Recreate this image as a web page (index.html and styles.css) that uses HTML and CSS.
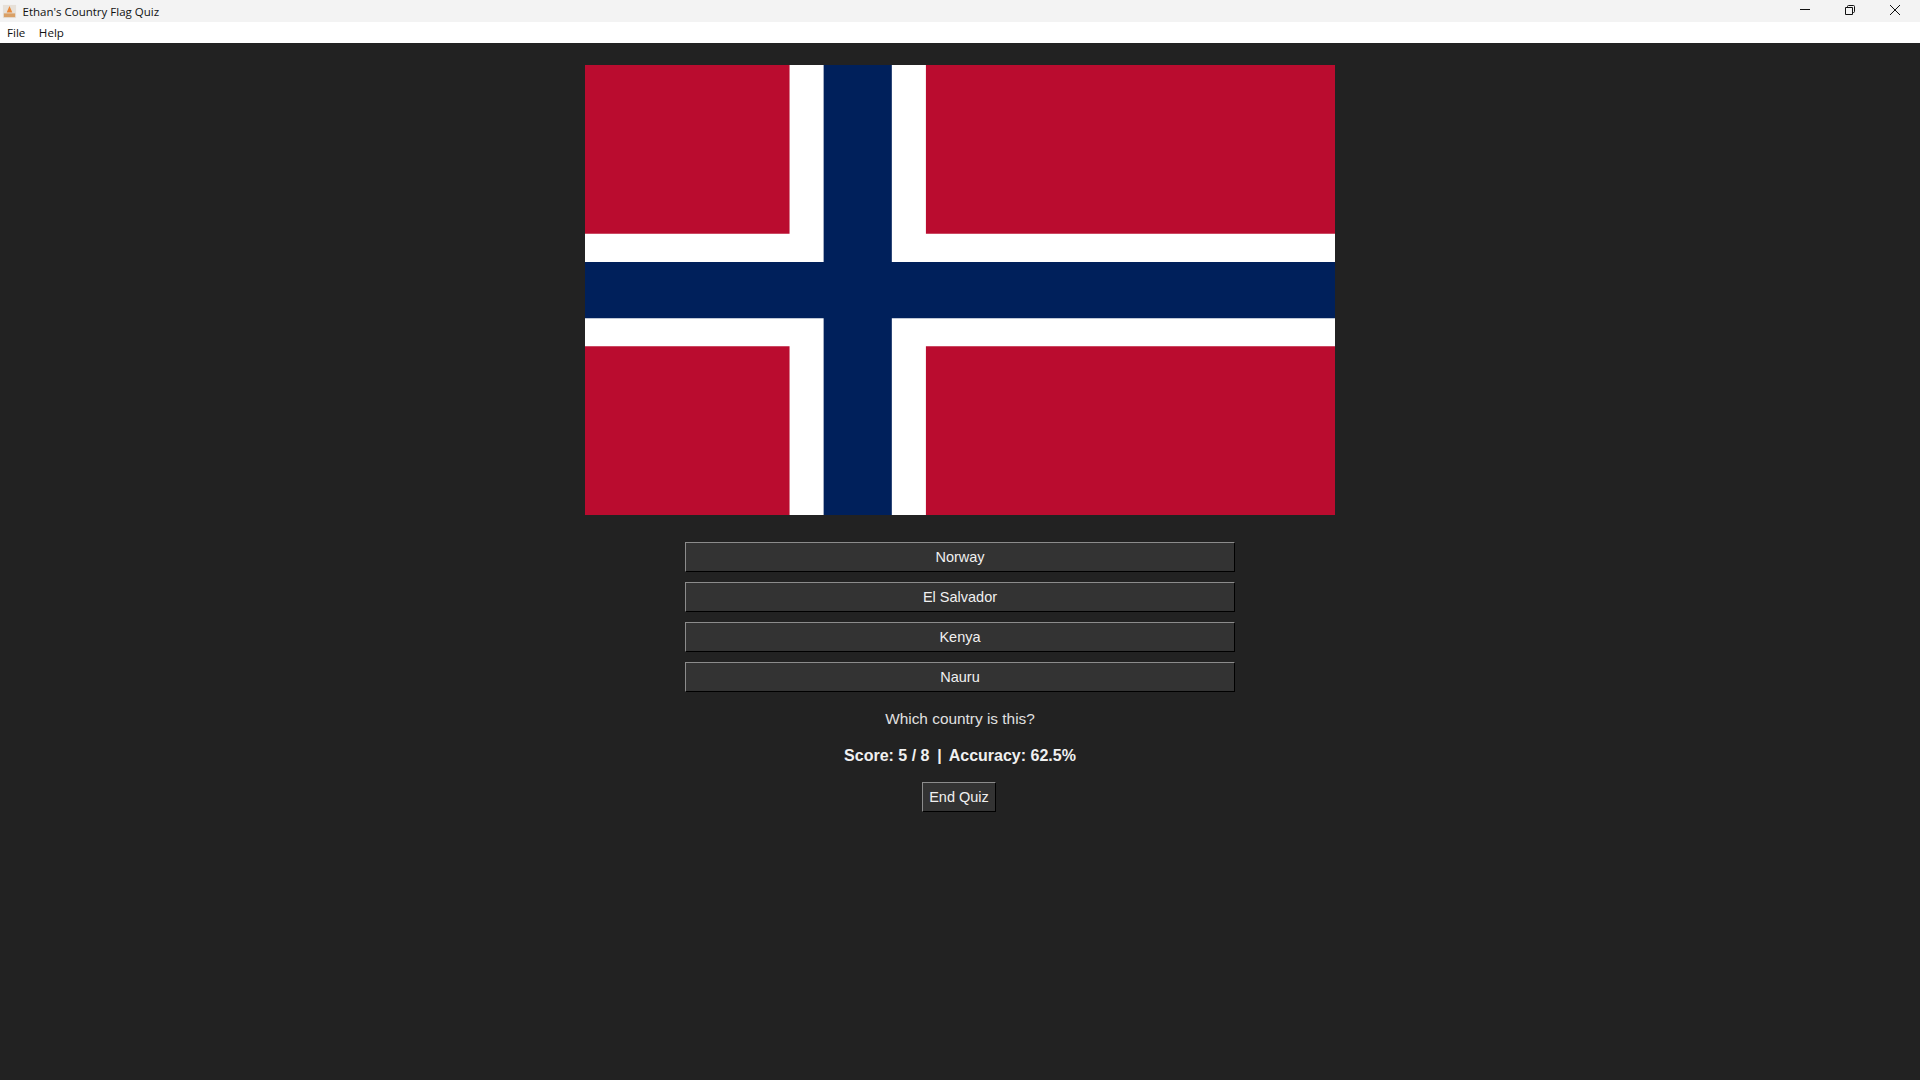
FILE: index.html
```html
<!DOCTYPE html>
<html lang="en">
<head>
<meta charset="utf-8">
<title>Ethan's Country Flag Quiz</title>
<link rel="stylesheet" href="styles.css">
</head>
<body>
<div class="window">
  <header class="titlebar">
    <svg class="app-icon" viewBox="0 0 16 16"><rect x="1" y="1" width="14" height="14" fill="#e6e0d8"/><path d="M8 2 L11 9 H5 Z" fill="#e8893a"/><rect x="2" y="10" width="12" height="4" fill="#d9a066"/></svg>
    <span class="title">Ethan's Country Flag Quiz</span>
    <div class="controls">
      <svg class="ctl" viewBox="0 0 12 12"><path d="M1 5.5H11" stroke="#111" fill="none"/></svg>
      <svg class="ctl" viewBox="0 0 12 12"><path d="M1.5 3.5H8.5V10.5H1.5Z M3.5 3.5V2.5Q3.5 1.5 4.5 1.5H9.5Q10.5 1.5 10.5 2.5V7.5Q10.5 8.5 9.5 8.5H8.5" stroke="#111" fill="none"/></svg>
      <svg class="ctl" viewBox="0 0 12 12"><path d="M1 1L11 11M11 1L1 11" stroke="#111" fill="none"/></svg>
    </div>
  </header>
  <nav class="menubar"><span class="menu">File</span><span class="menu">Help</span></nav>
  <main class="quiz">
    <svg class="flag" viewBox="0 0 22 16" preserveAspectRatio="none">
      <rect width="22" height="16" fill="#ba0c2f"/>
      <path d="M6 0H10V16H6Z M0 6H22V10H0Z" fill="#fff"/>
      <path d="M7 0H9V16H7Z M0 7H22V9H0Z" fill="#00205b"/>
    </svg>
    <div class="options">
      <button class="btn option">Norway</button>
      <button class="btn option">El Salvador</button>
      <button class="btn option">Kenya</button>
      <button class="btn option">Nauru</button>
    </div>
    <p class="prompt">Which country is this?</p>
    <p class="score">Score: 5 / 8<span class="sep">&nbsp;&nbsp;|&nbsp;&nbsp;</span>Accuracy: 62.5%</p>
    <button class="btn end">End Quiz</button>
  </main>
</div>
</body>
</html>
```

FILE: styles.css
```css
* { box-sizing: border-box; }
html, body { margin: 0; height: 100%; }
body { font-family: "Liberation Sans", Arial, sans-serif; background: #222; overflow: hidden; }
.window { display: flex; flex-direction: column; height: 1080px; }
.titlebar { height: 22px; background: #f3f3f3; display: flex; align-items: center; padding-left: 2px; font-family: "Open Sans", sans-serif; font-size: 11.5px; color: #111; }
.app-icon { width: 15px; height: 15px; }
.title { margin-left: 5.5px; }
.controls { margin-left: auto; display: flex; gap: 33px; padding-right: 19px; padding-bottom: 2px; }
.ctl { width: 12px; height: 12px; display: block; }
.menubar { height: 21px; background: #fff; display: flex; align-items: center; padding-left: 7px; gap: 13.5px; font-family: "Open Sans", sans-serif; font-size: 11.6px; color: #111; }
.quiz { flex: 1; background: #222; display: flex; flex-direction: column; align-items: center; padding-top: 22px; }
.flag { width: 750px; height: 450px; display: block; }
.options { margin-top: 27px; display: flex; flex-direction: column; gap: 10px; }
.btn { background: #333; color: #f0f0f0; font-family: "Liberation Sans", Arial, sans-serif; font-size: 14.5px; padding: 0; border: 1px solid; border-color: #8c8c8c #000 #000 #8c8c8c; }
.option { width: 550px; height: 30px; }
.prompt { margin: 17px 0 0; font-size: 15.4px; line-height: 19px; color: #e0e0e0; }
.score { margin: 18px 0 0; font-size: 16px; line-height: 19px; font-weight: bold; color: #f0f0f0; }
.sep { letter-spacing: -0.6px; }
.end { margin-top: 17px; margin-right: 2px; width: 74px; height: 30px; }
```
